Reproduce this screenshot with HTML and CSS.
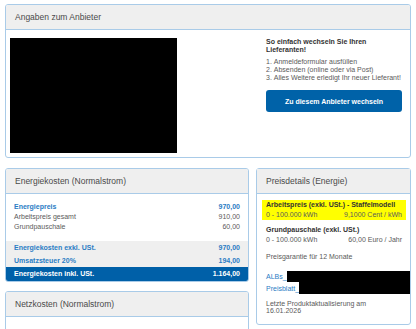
FILE: index.html
```html
<!DOCTYPE html>
<html lang="de">
<head>
    <meta charset="UTF-8">
    <meta name="viewport" content="width=device-width, initial-scale=1.0">
    <title>Tarifdetails</title>
    <link rel="stylesheet" href="styles.css">
</head>
<body>
    <div class="page">
        <div class="panel">
            <div class="panel-head">Angaben zum Anbieter</div>
            <div class="provider">
                <div class="logo-box"></div>
                <div class="switch-info">
                    <div class="switch-title">So einfach wechseln Sie Ihren Lieferanten!</div>
                    <ol class="steps">
                        <li>Anmeldeformular ausfüllen</li>
                        <li>Absenden (online oder via Post)</li>
                        <li>Alles Weitere erledigt Ihr neuer Lieferant!</li>
                    </ol>
                    <button class="switch-btn">Zu diesem Anbieter wechseln</button>
                </div>
            </div>
        </div>

        <div class="columns">
            <div class="col-left">
                <div class="panel">
                    <div class="panel-head">Energiekosten (Normalstrom)</div>
                    <div class="cost-list">
                        <div class="row row-title"><span>Energiepreis</span><span>970,00</span></div>
                        <div class="row"><span>Arbeitspreis gesamt</span><span>910,00</span></div>
                        <div class="row"><span>Grundpauschale</span><span>60,00</span></div>
                    </div>
                    <div class="subtotal">
                        <div class="row row-title"><span>Energiekosten exkl. USt.</span><span>970,00</span></div>
                        <div class="row row-title"><span>Umsatzsteuer 20%</span><span>194,00</span></div>
                    </div>
                    <div class="total"><span>Energiekosten inkl. USt.</span><span>1.164,00</span></div>
                </div>

                <div class="panel">
                    <div class="panel-head">Netzkosten (Normalstrom)</div>
                    <div class="panel-body"></div>
                </div>
            </div>

            <div class="panel panel-open">
                <div class="panel-head">Preisdetails (Energie)</div>
                <div class="highlight">
                    <div class="detail-title">Arbeitspreis (exkl. USt.) - Staffelmodell</div>
                    <div class="detail-row"><span>0 - 100.000 kWh</span><span>9,1000 Cent / kWh</span></div>
                </div>
                <div class="detail">
                    <div class="detail-title">Grundpauschale (exkl. USt.)</div>
                    <div class="detail-row"><span>0 - 100.000 kWh</span><span>60,00 Euro / Jahr</span></div>
                </div>
                <div class="note">Preisgarantie für 12 Monate</div>
                <div class="links">
                    <div><a href="#">ALBs_</a><span class="redacted r1"></span></div>
                    <div><a href="#">Preisblatt_</a><span class="redacted r2"></span></div>
                </div>
                <div class="updated">Letzte Produktaktualisierung am<br>16.01.2026</div>
            </div>
        </div>
    </div>
</body>
</html>
```

FILE: styles.css
```css
body {
    margin: 0;
    font-family: 'Liberation Sans', Arial, sans-serif;
    background-color: #fff;
    color: #5a5a5a;
    overflow: hidden;
}

.page {
    padding: 4px 5px 0;
}

.panel {
    border: 1px solid #a9cbe8;
    border-radius: 3px;
    background: #fff;
    overflow: hidden;
}

.panel-head {
    height: 24px;
    line-height: 24px;
    padding-left: 9px;
    background: #efefef;
    border-bottom: 1px solid #a9cbe8;
    font-size: 8.5px;
    color: #4a4a4a;
}

/* Anbieter */
.provider {
    display: flex;
    justify-content: space-between;
    padding: 8px 8px 4px 4px;
}

.logo-box {
    width: 167px;
    height: 115px;
    background: #000;
}

.switch-info {
    width: 136px;
    font-size: 7px;
}

.switch-title {
    font-weight: bold;
    color: #333;
    line-height: 8px;
}

.steps {
    margin: 4px 0 0;
    padding-left: 0;
    list-style-position: inside;
    line-height: 8px;
    white-space: nowrap;
}

.switch-btn {
    display: block;
    width: 136px;
    height: 22px;
    margin-top: 8px;
    padding: 0;
    border: none;
    border-radius: 3px;
    background: #0062a8;
    color: #fff;
    font-family: inherit;
    font-size: 7px;
    font-weight: bold;
}

/* Spalten */
.columns {
    display: grid;
    grid-template-columns: 244px 155px;
    gap: 7px;
    margin-top: 10px;
    align-items: start;
}

.col-left {
    display: flex;
    flex-direction: column;
    gap: 9px;
}

.row {
    display: flex;
    justify-content: space-between;
    padding: 0 8px;
    font-size: 7px;
}

.row-title {
    font-weight: bold;
    color: #2a7cc4;
}

.cost-list {
    padding: 8px 0 9px;
}

.cost-list .row {
    line-height: 10px;
}

.subtotal {
    background: #efefef;
}

.subtotal .row {
    line-height: 13px;
}

.total {
    display: flex;
    justify-content: space-between;
    padding: 0 8px;
    height: 14px;
    line-height: 14px;
    background: #0060a8;
    color: #fff;
    font-size: 7px;
    font-weight: bold;
}

.panel-body {
    height: 20px;
}

/* Preisdetails */
.panel-open {
    overflow: visible;
    padding-bottom: 10px;
    font-size: 7px;
}

.highlight {
    margin: 6px 4px 0 5px;
    padding: 0 4px;
    background: #ffff00;
}

.detail {
    margin-top: 5px;
    padding: 0 8px 0 9px;
}

.detail-title {
    font-weight: bold;
    color: #333;
    line-height: 10px;
}

.detail-row {
    display: flex;
    justify-content: space-between;
    line-height: 10px;
}

.note {
    padding: 7px 9px 0;
    line-height: 10px;
}

.links {
    padding: 9px 0 0 9px;
    white-space: nowrap;
}

.links div {
    display: flex;
    align-items: center;
    height: 11px;
}

.links div + div {
    height: 12px;
}

.links a {
    color: #2a7cc4;
    text-decoration: none;
}

.redacted {
    display: inline-block;
    background: #000;
}

.r1 {
    width: 126px;
    height: 11px;
}

.r2 {
    width: 117px;
    height: 12px;
}

.updated {
    padding: 6px 9px 0;
    line-height: 7px;
}
```
